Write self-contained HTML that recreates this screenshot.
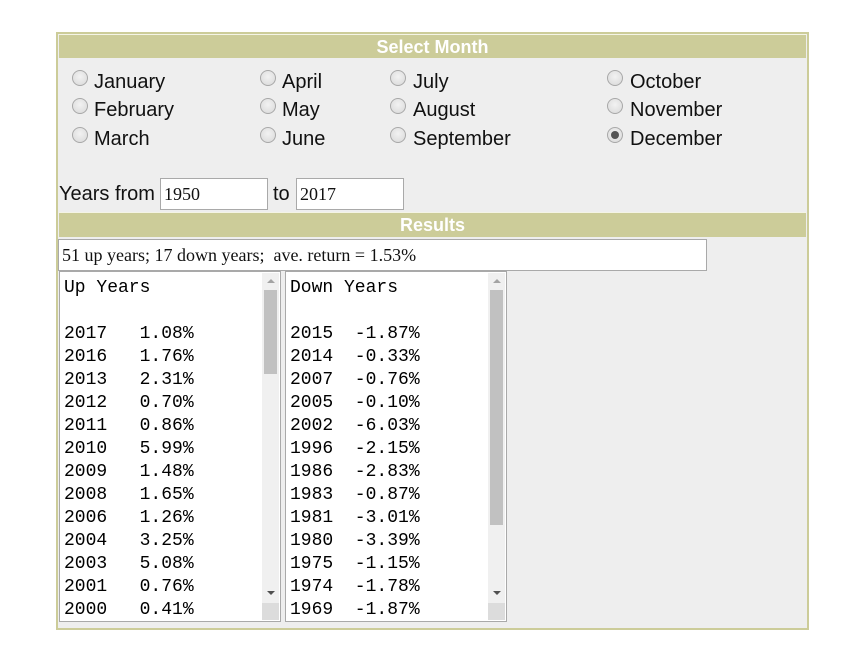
<!DOCTYPE html>
<html><head><meta charset="utf-8"><style>
*{margin:0;padding:0;box-sizing:border-box}
body{width:851px;height:667px;background:#fff;position:relative;font-family:"Liberation Sans",Arial,sans-serif;overflow:hidden}
.abs{position:absolute}
#outer{left:56px;top:32px;width:753px;height:598px;border:2px solid #cccc99;background:#eeeeee}
.bar{position:absolute;left:59px;width:747px;background:#cccc99;color:#fff;font-weight:bold;font-size:18px;text-align:center;line-height:24px;border-top:1px solid #f4f4e6}
.r{position:absolute;width:16px;height:16px;border-radius:50%;border:1px solid #a8a8a8;background:radial-gradient(circle at 50% 40%,#f2f2f2,#d8d8d8)}
.r.on::after{content:"";position:absolute;left:3px;top:3px;width:8px;height:8px;border-radius:50%;background:#555}
.l{position:absolute;font-size:20px;color:#111;line-height:24px}
.inp{position:absolute;background:#fff;border:1px solid #a9a9a9;font-family:"Liberation Serif",serif;font-size:18px;padding-left:3px;line-height:30px;color:#111}
.ta{position:absolute;top:271px;height:351px;background:#fff;border:1px solid #a9a9a9;overflow:hidden}
.ta pre{position:absolute;left:4px;top:5px;font-family:"Liberation Mono",monospace;font-size:18px;line-height:23px;color:#000}
.sb{position:absolute;right:1px;top:1px;width:17px;bottom:1px;background:#f0f0f0}
.th{position:absolute;left:2px;width:13px;top:17px;background:#c1c1c1}
.up{position:absolute;left:5px;top:6px;border-left:4px solid transparent;border-right:4px solid transparent;border-bottom:4px solid #a3a3a3}
.dn{position:absolute;left:5px;bottom:25px;border-left:4px solid transparent;border-right:4px solid transparent;border-top:4px solid #505050}
.gr{position:absolute;left:0;bottom:0;width:17px;height:17px;background:#dcdcdc}
</style></head><body>
<div id="outer" class="abs"></div>
<div class="bar" style="top:34px;height:24px">Select Month</div>

<div class="r" style="left:72px;top:70px"></div><div class="l" style="left:94px;top:70px">January</div>
<div class="r" style="left:72px;top:98px"></div><div class="l" style="left:94px;top:98px">February</div>
<div class="r" style="left:72px;top:127px"></div><div class="l" style="left:94px;top:127px">March</div>
<div class="r" style="left:260px;top:70px"></div><div class="l" style="left:282px;top:70px">April</div>
<div class="r" style="left:260px;top:98px"></div><div class="l" style="left:282px;top:98px">May</div>
<div class="r" style="left:260px;top:127px"></div><div class="l" style="left:282px;top:127px">June</div>
<div class="r" style="left:390px;top:70px"></div><div class="l" style="left:413px;top:70px">July</div>
<div class="r" style="left:390px;top:98px"></div><div class="l" style="left:413px;top:98px">August</div>
<div class="r" style="left:390px;top:127px"></div><div class="l" style="left:413px;top:127px">September</div>
<div class="r" style="left:607px;top:70px"></div><div class="l" style="left:630px;top:70px">October</div>
<div class="r" style="left:607px;top:98px"></div><div class="l" style="left:630px;top:98px">November</div>
<div class="r on" style="left:607px;top:127px"></div><div class="l" style="left:630px;top:127px">December</div>

<div class="l" style="left:59px;top:182px">Years from</div>
<div class="inp" style="left:160px;top:178px;width:108px;height:32px">1950</div>
<div class="l" style="left:273px;top:182px">to</div>
<div class="inp" style="left:296px;top:178px;width:108px;height:32px">2017</div>

<div class="bar" style="top:212px;height:25px">Results</div>
<div class="inp" style="left:58px;top:239px;width:649px;height:32px;line-height:31px">51 up years; 17 down years;&nbsp; ave. return = 1.53%</div>

<div class="ta" style="left:59px;width:222px"><pre>Up Years

2017   1.08%
2016   1.76%
2013   2.31%
2012   0.70%
2011   0.86%
2010   5.99%
2009   1.48%
2008   1.65%
2006   1.26%
2004   3.25%
2003   5.08%
2001   0.76%
2000   0.41%</pre>
<div class="sb"><div class="up"></div><div class="th" style="height:84px"></div><div class="dn"></div><div class="gr"></div></div></div>

<div class="ta" style="left:285px;width:222px"><pre>Down Years

2015  -1.87%
2014  -0.33%
2007  -0.76%
2005  -0.10%
2002  -6.03%
1996  -2.15%
1986  -2.83%
1983  -0.87%
1981  -3.01%
1980  -3.39%
1975  -1.15%
1974  -1.78%
1969  -1.87%</pre>
<div class="sb"><div class="up"></div><div class="th" style="height:235px"></div><div class="dn"></div><div class="gr"></div></div></div>
</body></html>
